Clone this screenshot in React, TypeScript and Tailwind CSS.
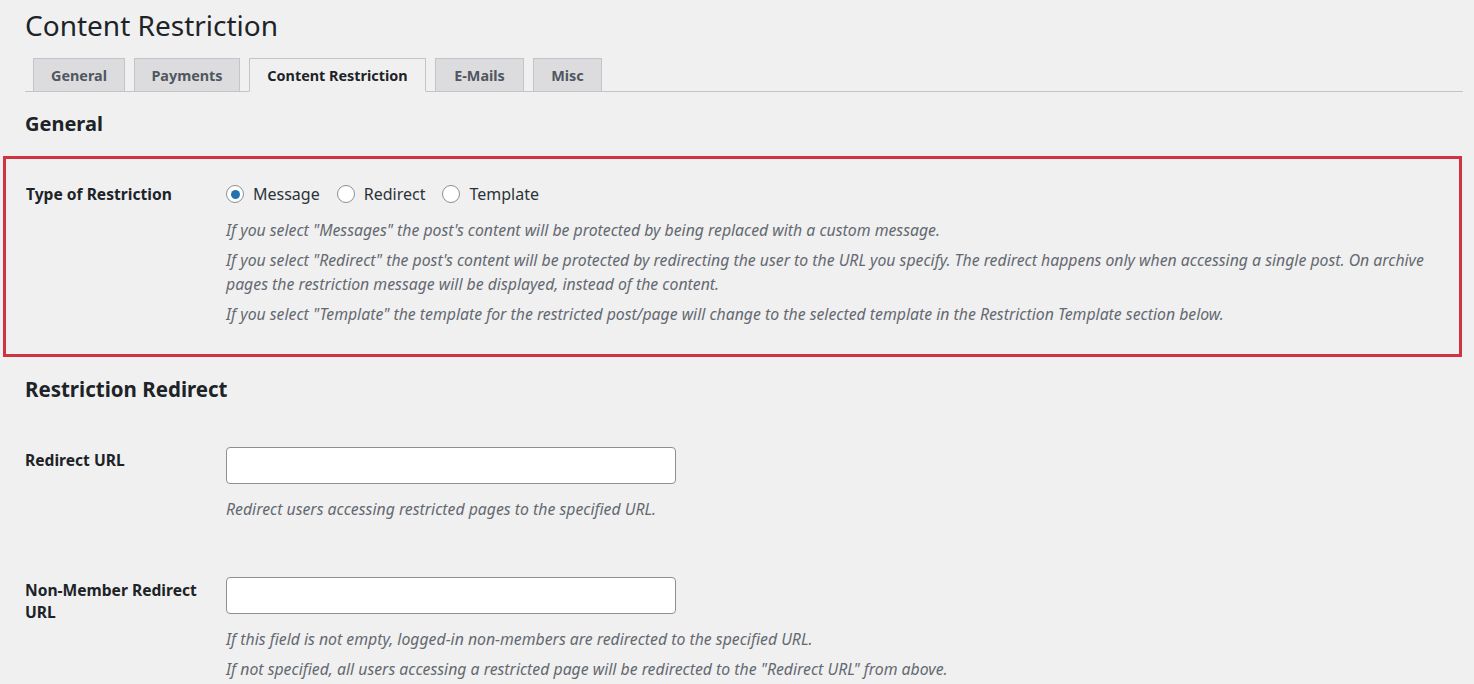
const TABS = [
  { label: 'General', w: 'w-[92px]' },
  { label: 'Payments', w: 'w-[106px]' },
  { label: 'Content Restriction', w: 'w-[177px]', active: true },
  { label: 'E-Mails', w: 'w-[89px]' },
  { label: 'Misc', w: 'w-[69px]' },
]

const RADIOS = [
  { label: 'Message', checked: true },
  { label: 'Redirect' },
  { label: 'Template' },
]

function Radio({ label, checked }: { label: string; checked?: boolean }) {
  return (
    <label className="flex items-center gap-[9px]">
      <span className="flex h-[18px] w-[18px] items-center justify-center rounded-full border border-[#8c8f94] bg-white">
        {checked && <span className="h-[9px] w-[9px] rounded-full bg-[#2271b1]" />}
      </span>
      <span>{label}</span>
    </label>
  )
}

export default function App() {
  return (
    <div className="min-h-screen w-[1474px] bg-[#f0f0f1] font-['Noto_Sans','Open_Sans',sans-serif] text-[#3c434a]">
      <div className="pl-[25px] pr-[11px]">
        <h1 className="pt-2 text-[28px] leading-[34px] font-normal text-[#1d2327]">Content Restriction</h1>

        {/* Tabs */}
        <div className="mt-4 flex items-end gap-[9px] border-b border-[#c3c4c7] pl-2">
          {TABS.map((t) => (
            <div
              key={t.label}
              className={`${t.w} -mb-px flex h-[34px] items-center justify-center border border-[#c3c4c7] pt-[2px] text-[14.4px] font-bold ${
                t.active ? 'border-b-[#f0f0f1] bg-[#f0f0f1] text-[#1d2327]' : 'bg-[#dcdcde] text-[#50575e]'
              }`}
            >
              {t.label}
            </div>
          ))}
        </div>

        <h2 className="mt-[18px] text-[20px] leading-[28px] font-bold text-[#1d2327]">General</h2>
      </div>

      {/* Highlighted setting */}
      <div className="mt-[18px] ml-[3px] w-[1459px] border-[3px] border-[#cf3440] pl-[20px] pt-[25px] pb-[28px]">
        <div className="flex">
          <div className="w-[200px] shrink-0 text-[15.6px] leading-5 font-bold text-[#1d2327]">Type of Restriction</div>
          <div className="flex-1">
            <div className="flex h-6 -mt-[2px] items-center gap-[17px] text-[16px] text-[#2c3338]">
              {RADIOS.map((r) => (
                <Radio key={r.label} label={r.label} checked={r.checked} />
              ))}
            </div>
            <div className="mt-3 text-[15.8px] leading-6 italic text-[#646970]">
              <p>If you select "Messages" the post's content will be protected by being replaced with a custom message.</p>
              <p className="mt-[6px]">
                If you select "Redirect" the post's content will be protected by redirecting the user to the URL you specify. The redirect happens only when accessing a single post. On archive pages the restriction message will be displayed, instead of the content.
              </p>
              <p className="mt-[6px]">
                If you select "Template" the template for the restricted post/page will change to the selected template in the Restriction Template section below.
              </p>
            </div>
          </div>
        </div>
      </div>

      <div className="pl-[25px]">
        <h2 className="mt-[18px] text-[20.5px] leading-[28px] font-bold text-[#1d2327]">Restriction Redirect</h2>

        {/* Redirect URL */}
        <div className="mt-[44px] flex">
          <div className="w-[201px] shrink-0 pt-[3px] text-[15.6px] leading-5 font-bold text-[#1d2327]">Redirect URL</div>
          <div>
            <input
              type="text"
              className="block h-[37px] w-[450px] rounded-[4px] border border-[#8c8f94] bg-white"
            />
            <p className="mt-[13px] text-[15.8px] leading-6 italic text-[#646970]">
              Redirect users accessing restricted pages to the specified URL.
            </p>
          </div>
        </div>

        {/* Non-member redirect URL */}
        <div className="mt-[56px] flex">
          <div className="w-[201px] shrink-0 pt-[2px] pr-2 text-[15.6px] leading-[22px] font-bold text-[#1d2327]">
            Non-Member Redirect URL
          </div>
          <div>
            <input
              type="text"
              className="block h-[37px] w-[450px] rounded-[4px] border border-[#8c8f94] bg-white"
            />
            <div className="mt-[13px] text-[15.8px] leading-6 italic text-[#646970]">
              <p>If this field is not empty, logged-in non-members are redirected to the specified URL.</p>
              <p className="mt-[6px]">
                If not specified, all users accessing a restricted page will be redirected to the "Redirect URL" from above.
              </p>
            </div>
          </div>
        </div>
      </div>
    </div>
  )
}
